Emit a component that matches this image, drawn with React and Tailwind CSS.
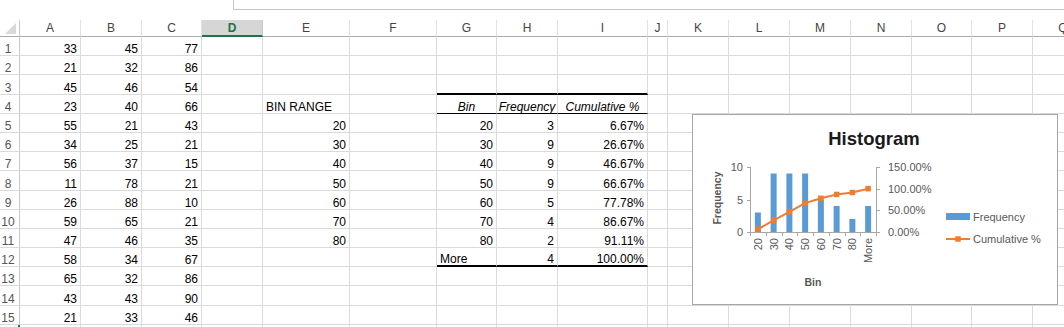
import React from 'react';

// column letters with their pixel widths (taken from the sheet)
const COLS = [
  { key: 'A', w: 'w-[61px]' },
  { key: 'B', w: 'w-[61px]' },
  { key: 'C', w: 'w-[60px]' },
  { key: 'D', w: 'w-[61px]' },
  { key: 'E', w: 'w-[87px]' },
  { key: 'F', w: 'w-[87px]' },
  { key: 'G', w: 'w-[60px]' },
  { key: 'H', w: 'w-[61px]' },
  { key: 'I', w: 'w-[90px]' },
  { key: 'J', w: 'w-[20px]' },
  { key: 'K', w: 'w-[61px]' },
  { key: 'L', w: 'w-[61px]' },
  { key: 'M', w: 'w-[61px]' },
  { key: 'N', w: 'w-[61px]' },
  { key: 'O', w: 'w-[60px]' },
  { key: 'P', w: 'w-[61px]' },
  { key: 'Q', w: 'w-[61px]' },
];

const colA = [33, 21, 45, 23, 55, 34, 56, 11, 26, 59, 47, 58, 65, 43, 21];
const colB = [45, 32, 46, 40, 21, 25, 37, 78, 88, 65, 46, 34, 32, 43, 33];
const colC = [77, 86, 54, 66, 43, 21, 15, 21, 10, 21, 35, 67, 86, 90, 46];

const bins = ['20', '30', '40', '50', '60', '70', '80', 'More'];
const freq = [3, 9, 9, 9, 5, 4, 2, 4];
const cum = ['6.67%', '26.67%', '46.67%', '66.67%', '77.78%', '86.67%', '91.11%', '100.00%'];
const cumVal = [6.67, 26.67, 46.67, 66.67, 77.78, 86.67, 91.11, 100];

function cellFor(r, key) {
  const i = r - 1;
  if (r > 15) return {};
  if (key === 'A') return { text: colA[i], align: 'justify-end' };
  if (key === 'B') return { text: colB[i], align: 'justify-end' };
  if (key === 'C') return { text: colC[i], align: 'justify-end' };
  if (key === 'E') {
    if (r === 4) return { text: 'BIN RANGE', align: 'justify-start' };
    if (r >= 5 && r <= 11) return { text: bins[r - 5], align: 'justify-end' };
  }
  if (key === 'G' || key === 'H' || key === 'I') {
    if (r === 3) return { edge: 'border-b-2 border-b-black' };
    if (r === 4) {
      const label = { G: 'Bin', H: 'Frequency', I: 'Cumulative %' }[key];
      return { text: label, align: 'justify-center', italic: true, edge: 'border-b border-b-black' };
    }
    if (r >= 5 && r <= 12) {
      const j = r - 5;
      const edge = r === 12 ? 'border-b-2 border-b-black' : undefined;
      if (key === 'G') return { text: bins[j], align: r === 12 ? 'justify-start' : 'justify-end', edge };
      if (key === 'H') return { text: freq[j], align: 'justify-end', edge };
      return { text: cum[j], align: 'justify-end', edge };
    }
  }
  return {};
}

function HeaderRow() {
  return (
    <div className="flex h-[17px]">
      <div className="relative w-[20px] shrink-0 border-r border-r-[#c8c8c8] border-b border-b-[#ababab]">
        <svg className="absolute right-[3px] bottom-[2px]" width="11" height="11">
          <polygon points="11,0 11,11 0,11" fill="#d9d9d9" />
        </svg>
      </div>
      {COLS.map((c) =>
        c.key === 'D' ? (
          <div
            key={c.key}
            className={`${c.w} shrink-0 flex items-center justify-center bg-[#d6d6d6] border-r border-r-[#c8c8c8] border-b-2 border-b-[#217346] font-bold text-[#217346]`}
          >
            {c.key}
          </div>
        ) : (
          <div
            key={c.key}
            className={`${c.w} shrink-0 flex items-center justify-center border-r border-r-[#e1e1e1] border-b border-b-[#ababab] text-[#444]`}
          >
            {c.key}
          </div>
        )
      )}
    </div>
  );
}

function Row({ r }) {
  // row 16 only peeks in at the bottom edge; its header carries the active-row mark
  const active = r === 16;
  return (
    <div className="flex h-[19.2px]">
      <div
        className={`w-[20px] shrink-0 flex items-end justify-center pr-[3px] leading-[12px] text-[#555] border-b border-b-[#dadada] ${
          active ? 'border-r-2 border-r-[#217346]' : 'border-r border-r-[#c8c8c8]'
        }`}
      >
        {active ? '' : r}
      </div>
      {COLS.map((c) => {
        const cell = cellFor(r, c.key);
        return (
          <div
            key={c.key}
            className={`${c.w} shrink-0 flex items-end px-[3px] leading-[12px] border-r border-r-[#dadada] ${
              cell.edge || 'border-b border-b-[#dadada]'
            } ${cell.align || 'justify-start'} ${cell.italic ? 'italic' : ''}`}
          >
            {cell.text}
          </div>
        );
      })}
    </div>
  );
}

function Histogram() {
  const X0 = 58;
  const X1 = 184;
  const Y0 = 118;
  const Y1 = 53;
  const cw = (X1 - X0) / 8;
  const fy = (v) => Y0 - (v / 10) * (Y0 - Y1);
  const cy = (v) => Y0 - (v / 150) * (Y0 - Y1);
  const pts = cumVal.map((v, i) => [X0 + cw * (i + 0.5), cy(v)]);

  return (
    <div className="absolute left-[692px] top-[114px] w-[366px] h-[191px] bg-white border border-[#a6a6a6]">
      <svg width="364" height="189" viewBox="1 1 364 189" className="font-['Liberation_Sans',Arial,sans-serif]">
        <text x="182" y="31" textAnchor="middle" fontSize="18.5" fontWeight="bold" fill="#1a1a1a">
          Histogram
        </text>

        {/* left axis */}
        <line x1={X0 + 0.5} y1={Y1} x2={X0 + 0.5} y2={Y0} stroke="#a6a6a6" />
        {[0, 5, 10].map((v) => (
          <g key={v}>
            <line x1={X0 - 3} y1={Math.round(fy(v)) + 0.5} x2={X0} y2={Math.round(fy(v)) + 0.5} stroke="#a6a6a6" />
            <text x="51" y={fy(v) + 4} textAnchor="end" fontSize="11" fill="#595959">
              {v}
            </text>
          </g>
        ))}
        <text
          transform="translate(29 84) rotate(-90)"
          textAnchor="middle"
          fontSize="10.5"
          fontWeight="bold"
          fill="#595959"
        >
          Frequency
        </text>

        {/* bars */}
        {freq.map((f, i) => (
          <rect key={i} x={X0 + cw * (i + 0.5) - 3} y={fy(f)} width="6" height={Y0 - fy(f)} fill="#5b9bd5" />
        ))}

        {/* x axis */}
        <line x1={X0} y1={Y0 + 0.5} x2={X1} y2={Y0 + 0.5} stroke="#a6a6a6" />
        {Array.from({ length: 9 }).map((_, k) => (
          <line
            key={k}
            x1={Math.round(X0 + cw * k) + 0.5}
            y1={Y0}
            x2={Math.round(X0 + cw * k) + 0.5}
            y2={Y0 + 4}
            stroke="#a6a6a6"
          />
        ))}
        {bins.map((b, i) => (
          <text
            key={b}
            transform={`translate(${X0 + cw * (i + 0.5) + 4} 124) rotate(-90)`}
            textAnchor="end"
            fontSize="11"
            fill="#595959"
          >
            {b}
          </text>
        ))}
        <text x="121" y="172" textAnchor="middle" fontSize="10.5" fontWeight="bold" fill="#595959">
          Bin
        </text>

        {/* cumulative line */}
        <polyline points={pts.map((p) => p.join(',')).join(' ')} fill="none" stroke="#ed7d31" strokeWidth="2" />
        {pts.map(([x, y], i) => (
          <rect key={i} x={x - 2.75} y={y - 2.75} width="5.5" height="5.5" fill="#ed7d31" />
        ))}

        {/* right axis */}
        <line x1={X1 + 0.5} y1={Y1} x2={X1 + 0.5} y2={Y0} stroke="#a6a6a6" />
        {[0, 50, 100, 150].map((v) => (
          <g key={v}>
            <line x1={X1} y1={Math.round(cy(v)) + 0.5} x2={X1 + 4} y2={Math.round(cy(v)) + 0.5} stroke="#a6a6a6" />
            <text x="196" y={cy(v) + 4} fontSize="11" fill="#595959">
              {v.toFixed(2)}%
            </text>
          </g>
        ))}

        {/* legend */}
        <rect x="254" y="99" width="24" height="7" fill="#5b9bd5" />
        <text x="281" y="107" fontSize="11" fill="#595959">
          Frequency
        </text>
        <line x1="254" y1="125" x2="278" y2="125" stroke="#ed7d31" strokeWidth="2" />
        <rect x="263.25" y="122.25" width="5.5" height="5.5" fill="#ed7d31" />
        <text x="281" y="129" fontSize="11" fill="#595959">
          Cumulative %
        </text>
      </svg>
    </div>
  );
}

export default function App() {
  return (
    <div className="relative w-[1064px] h-[327px] overflow-hidden bg-white text-[12px] text-black font-['Liberation_Sans',Arial,sans-serif]">
      <div className="flex h-[20px]">
        <div className="w-[233px] shrink-0" />
        <div className="flex-1 h-[10px] border-l border-b border-[#c6c6c6]" />
      </div>
      <HeaderRow />
      {Array.from({ length: 16 }).map((_, i) => (
        <Row key={i} r={i + 1} />
      ))}
      <Histogram />
    </div>
  );
}
